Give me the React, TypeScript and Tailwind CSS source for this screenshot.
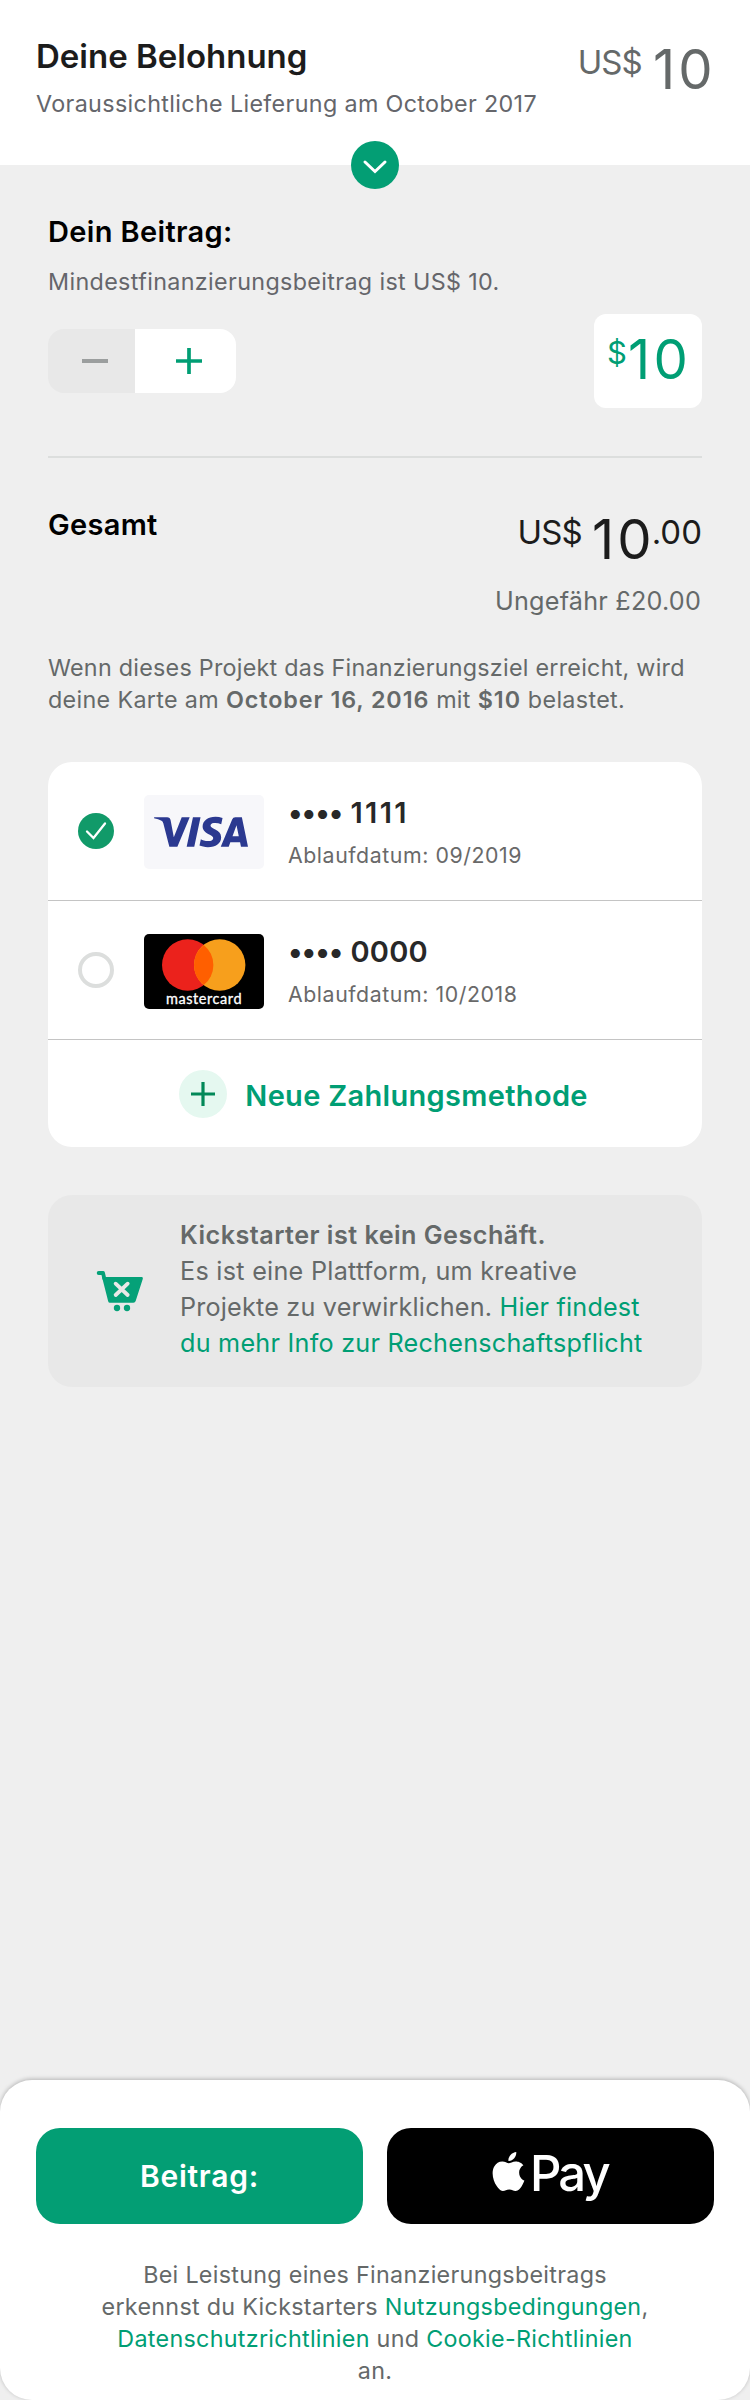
import type { ReactNode } from "react";
import { SiVisa } from "react-icons/si";

function Plus({ size, stroke, className }: { size: number; stroke: number; className: string }) {
  const c = size / 2;
  return (
    <svg width={size} height={size} viewBox={`0 0 ${size} ${size}`} className={className} fill="none" stroke="currentColor" strokeWidth={stroke}>
      <path d={`M0 ${c}H${size}M${c} 0V${size}`} />
    </svg>
  );
}

function CartIcon() {
  return (
    <svg width="50" height="42" viewBox="45 60 150 126" fill="none" className="text-[#05a178]">
      <path d="M56 69H69L73 86" stroke="currentColor" strokeWidth="11.5" strokeLinecap="round" strokeLinejoin="round" />
      <path d="M66 81H185Q190 81 188.500 86L167 153Q165.500 158.500 160 158.500H90Q85.500 158.500 84.500 154Z" fill="currentColor" />
      <path d="M107 101L143 135M143 101L107 135" stroke="#e8e8e8" strokeWidth="11.500" strokeLinecap="round" />
      <circle cx="111" cy="174" r="9.500" fill="currentColor" />
      <circle cx="141" cy="174" r="9.500" fill="currentColor" />
    </svg>
  );
}

function AppleLogo() {
  return (
    <svg width="39" height="39" viewBox="0 0 24 24" fill="currentColor">
      <path d="M12.152 6.896c-.948 0-2.415-1.078-3.96-1.04-2.04.027-3.91 1.183-4.961 3.014-2.117 3.675-.546 9.103 1.519 12.09 1.013 1.454 2.208 3.09 3.792 3.039 1.52-.065 2.09-.987 3.935-.987 1.831 0 2.35.987 3.96.948 1.637-.026 2.676-1.48 3.676-2.948 1.156-1.688 1.636-3.325 1.662-3.415-.039-.013-3.182-1.221-3.22-4.857-.026-3.04 2.48-4.494 2.597-4.559-1.429-2.09-3.623-2.324-4.39-2.376-2-.156-3.675 1.09-4.61 1.09zM15.53 3.83c.843-1.012 1.4-2.427 1.245-3.83-1.207.052-2.662.805-3.532 1.818-.78.896-1.454 2.338-1.273 3.714 1.338.104 2.715-.688 3.559-1.701" />
    </svg>
  );
}

function VisaBadge() {
  return (
    <div className="flex h-[74px] w-[120px] items-center rounded-[5px] bg-[#f7f7fa] pl-2.5">
      <SiVisa size={94} className="shrink-0 text-[#2b3990]" />
    </div>
  );
}

function MastercardBadge() {
  return (
    <svg width="120" height="75" viewBox="0 0 120 75" className="rounded-[5px] bg-black">
      <circle cx="43.7" cy="31" r="25.700" fill="#eb221c" />
      <circle cx="75.700" cy="31" r="25.700" fill="#f79f1c" />
      <path d="M59.700 10.900A25.700 25.700 0 0 1 59.700 51.100A25.700 25.700 0 0 1 59.700 10.900Z" fill="#ff5f00" />
      <text x="22" y="69.500" textLength="75.500" fontSize="14.500" fontWeight="400" fill="#fff" stroke="#fff" strokeWidth="0.300" className="font-['Lato',sans-serif]">
        mastercard
      </text>
    </svg>
  );
}

function CardRow({ indicator, badge, digits, expiry }: { indicator: ReactNode; badge: ReactNode; digits: ReactNode; expiry: string }) {
  return (
    <div className="flex h-[139px] items-center border-b border-[#c4c4c4] pl-[30px]">
      {indicator}
      <div className="ml-[30px] mt-[2px]">{badge}</div>
      <div className="ml-6 h-[72px]">
        <div className="flex text-[29px] font-semibold leading-[35px] text-[#282828]">
          <span className="w-[62.5px] tracking-[-1.03px]">••••</span>
          {digits}
        </div>
        <p className="mt-3 text-[21.3px] leading-[26px] tracking-[0.57px] text-[#696969]">{expiry}</p>
      </div>
    </div>
  );
}

function Link({ children }: { children: ReactNode }) {
  return <a className="text-[#009e74]">{children}</a>;
}

export default function App() {
  return (
    <div className="flex h-[2400px] w-[750px] flex-col overflow-hidden bg-[#efefef] font-['Inter',sans-serif] text-[#656969]">
      <header className="relative flex h-[165px] shrink-0 justify-between bg-white pl-9 pt-9">
        <div>
          <h1 className="text-[33px] font-semibold leading-10 text-[#1c1c1c]">Deine Belohnung</h1>
          <p className="mt-3 text-[23.3px] leading-[31px] tracking-[0.35px] text-[#65666b]">
            Voraussichtliche Lieferung am October 2017
          </p>
        </div>
        <div className="flex w-[172.3px]">
          <span className="mt-1.5 w-[75.3px] text-[33px] leading-10 tracking-[-1px]">US$</span>
          <span className="text-[54.5px] leading-[66px] tracking-[3px]">10</span>
        </div>
        <button className="absolute left-[351px] top-[141px] flex size-12 items-center justify-center rounded-full bg-[#039e74]">
          <svg width="28" height="18" viewBox="0 0 28 18" fill="none" stroke="#fff" strokeWidth="3" strokeLinecap="round" className="mt-[3px]">
            <path d="M4 4L14 13.500L24 4" />
          </svg>
        </button>
      </header>

      <main className="flex flex-1 flex-col px-12 pt-[49px]">
        <h2 className="text-[29px] font-semibold leading-[35px] tracking-[0.35px] text-black">Dein Beitrag:</h2>
        <p className="mt-[17px] text-[23.3px] leading-[31px] tracking-[0.36px] text-[#65666b]">
          Mindestfinanzierungsbeitrag ist US$ 10.
        </p>

        <div className="mt-[17px] flex h-[94px] items-center justify-between">
          <div className="flex h-16 w-[188px] overflow-hidden rounded-2xl">
            <button className="flex w-[87px] items-center bg-[#e8e8e8] pl-[34px]">
              <span className="h-[3.5px] w-[26px] bg-[#9b9e9e]" />
            </button>
            <button className="flex flex-1 items-center bg-white pl-[41px]">
              <Plus size={26} stroke={3.7} className="text-[#009e74]" />
            </button>
          </div>
          <div className="flex h-[94px] w-[108px] rounded-xl bg-white pl-[13px] text-[#009e74]">
            <span className="mt-[19px] w-[21px] text-[31px] leading-[39px]">$</span>
            <span className="mt-3 text-[54.5px] leading-[66px] tracking-[3.3px]">10</span>
          </div>
        </div>

        <div className="mt-12 h-[2px] bg-[#dcdedd]" />

        <div className="mt-12 flex h-[66px] justify-between">
          <h2 className="mt-px text-[29px] font-semibold leading-[35px] tracking-[0.3px] text-black">Gesamt</h2>
          <div className="flex w-[184.6px] text-[#1c1c1c]">
            <span className="mt-1.5 w-[75.3px] text-[33px] leading-10 tracking-[-0.8px]">US$</span>
            <span className="w-[59.6px] text-[54.5px] leading-[66px] tracking-[3px]">10</span>
            <span className="mt-1.5 text-[33px] leading-10">.00</span>
          </div>
        </div>
        <p className="mt-[11px] pr-px text-right text-[25.2px] leading-9 tracking-[0.22px]">Ungefähr £20.00</p>

        <p className="mt-[33px] whitespace-nowrap text-[23.3px] leading-8 tracking-[0.26px]">
          Wenn dieses Projekt das Finanzierungsziel erreicht, wird
          <br />
          <span className="tracking-[0.34px]">
            deine Karte am <b className="font-semibold tracking-[0.92px]">October 16, 2016</b> mit{" "}
            <b className="font-semibold tracking-[0.95px]">$10</b> belastet.
          </span>
        </p>

        <section className="mt-[46px] h-[385px] overflow-hidden rounded-3xl bg-white">
          <CardRow
            indicator={
              <svg width="36" height="36" viewBox="0 0 36 36" fill="none">
                <circle cx="18" cy="18" r="18" fill="#119a69" />
                <path d="M9 18.500L15.500 25L27 10.500" stroke="#fff" strokeWidth="2.300" strokeLinecap="round" />
              </svg>
            }
            badge={<VisaBadge />}
            digits={<span className="tracking-[2.3px]">1111</span>}
            expiry="Ablaufdatum: 09/2019"
          />
          <CardRow
            indicator={<span className="size-9 rounded-full border-4 border-[#dcdedd]" />}
            badge={<MastercardBadge />}
            digits={<span className="tracking-[0.2px]">0000</span>}
            expiry="Ablaufdatum: 10/2018"
          />
          <button className="flex pl-[131px] pt-[30px]">
            <span className="flex size-12 items-center justify-center rounded-full bg-[#e5f8f0] text-[#028858]">
              <Plus size={24} stroke={3.2} className="" />
            </span>
            <span className="ml-[18.3px] mt-2 text-[29px] font-semibold leading-[35px] tracking-[0.32px] text-[#009e74]">
              Neue Zahlungsmethode
            </span>
          </button>
        </section>

        <section className="mt-12 flex h-48 rounded-3xl bg-[#e8e8e8] pl-[47px] pt-[22px]">
          <div className="mt-[53px] w-[85px]">
            <CartIcon />
          </div>
          <p className="whitespace-nowrap text-[25.2px] leading-9 tracking-[0.27px]">
            <b className="font-semibold tracking-[0.47px]">Kickstarter ist kein Geschäft.</b>
            <br />
            Es ist eine Plattform, um kreative
            <br />
            <span className="tracking-[0.19px]">
              Projekte zu verwirklichen. <Link>Hier findest</Link>
            </span>
            <br />
            <span className="tracking-[0.24px]">
              <Link>du mehr Info zur Rechenschaftspflicht</Link>
            </span>
          </p>
        </section>
      </main>

      <footer className="h-80 shrink-0 rounded-[32px] bg-white px-9 pt-12 shadow-[0_-1px_4px_rgba(0,0,0,0.25)]">
        <div className="grid grid-cols-2 gap-6">
          <button className="h-24 rounded-3xl bg-[#039e74] text-[30px] font-semibold leading-9 tracking-[0.74px] text-white">
            Beitrag:
          </button>
          <button className="flex h-24 rounded-3xl bg-black pl-[101.5px] pt-4 text-white">
            <span className="mt-2">
              <AppleLogo />
            </span>
            <span className="ml-[2.5px] text-[49px] font-medium leading-[59px] tracking-[-2.9px]">Pay</span>
          </button>
        </div>
        <p className="mt-[35px] text-center text-[23.3px] leading-8 tracking-[0.3px]">
          Bei Leistung eines Finanzierungsbeitrags
          <br />
          erkennst du Kickstarters <Link>Nutzungsbedingungen</Link>,
          <br />
          <Link>Datenschutzrichtlinien</Link> und <Link>Cookie-Richtlinien</Link>
          <br />
          an.
        </p>
      </footer>
    </div>
  );
}
